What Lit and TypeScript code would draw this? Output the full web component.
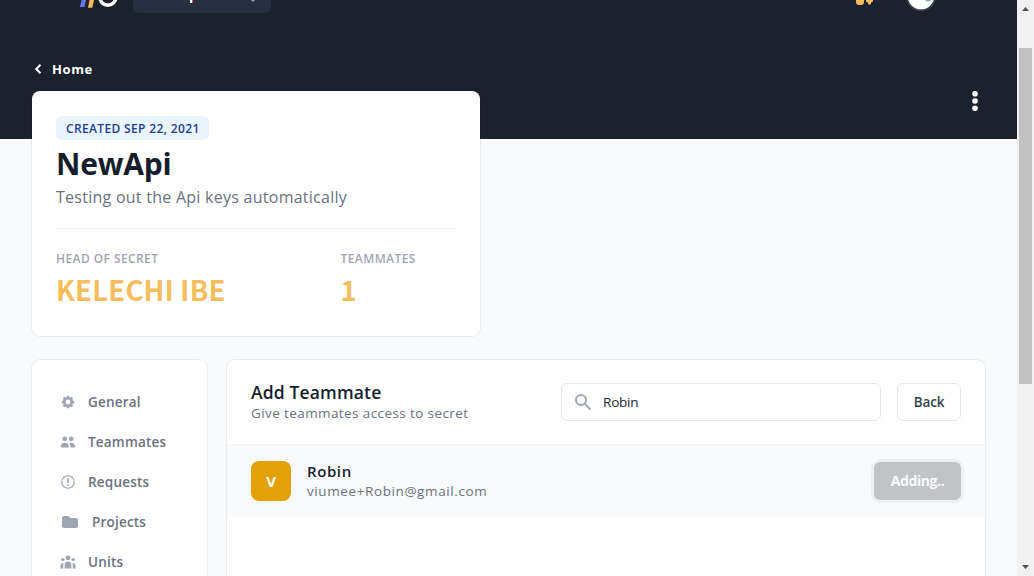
import { LitElement, html, css, svg } from "lit";
import { customElement } from "lit/decorators.js";

const icons = {
  gear: svg`<path fill-rule="evenodd" d="M11.49 3.17c-.38-1.56-2.6-1.56-2.98 0a1.532 1.532 0 01-2.286.948c-1.372-.836-2.942.734-2.106 2.106.54.886.061 2.042-.947 2.287-1.561.379-1.561 2.6 0 2.978a1.532 1.532 0 01.947 2.287c-.836 1.372.734 2.942 2.106 2.106a1.532 1.532 0 012.287.947c.379 1.561 2.6 1.561 2.978 0a1.533 1.533 0 012.287-.947c1.372.836 2.942-.734 2.106-2.106a1.533 1.533 0 01.947-2.287c1.561-.379 1.561-2.6 0-2.978a1.532 1.532 0 01-.947-2.287c.836-1.372-.734-2.942-2.106-2.106a1.532 1.532 0 01-2.287-.947zM10 13a3 3 0 100-6 3 3 0 000 6z"/>`,
  users: svg`<path d="M9 6a3 3 0 11-6 0 3 3 0 016 0zM17 6a3 3 0 11-6 0 3 3 0 016 0zM12.93 17c.046-.327.07-.66.07-1a6.97 6.97 0 00-1.5-4.33A5 5 0 0119 16v1h-6.07zM6 11a5 5 0 015 5v1H1v-1a5 5 0 015-5z"/>`,
  alert: svg`<circle cx="10" cy="10" r="7.800" fill="none" stroke="currentColor" stroke-width="1.500"/><path d="M9 5.500h2v5.600H9zM9 12.500h2v2H9z"/>`,
  folder: svg`<path d="M2 6a2 2 0 012-2h4.500l2 2H16a2 2 0 012 2V14a2 2 0 01-2 2H4a2 2 0 01-2-2z"/>`,
  group: svg`<circle cx="10" cy="4.800" r="3"/><circle cx="3.600" cy="7" r="2.100"/><circle cx="16.400" cy="7" r="2.100"/><path d="M5.800 18v-4.500a4.200 4.200 0 018.400 0V18zM.5 18v-3.500a3.300 3.300 0 014-3.200c-.4.900-.5 1.700-.5 2.700v4zM19.500 18v-3.500a3.300 3.300 0 00-4-3.200c.4.900.5 1.700.5 2.700v4z"/>`,
};

@customElement("app-root")
export class AppRoot extends LitElement {
  static styles = css`
    :host {
      display: flex;
      height: 576px;
      overflow: hidden;
      font-family: "Open Sans", "Noto Sans", sans-serif;
      color: #161e2e;
    }
    * { box-sizing: border-box; }
    svg { display: block; flex: none; }
    .page {
      width: 1017px;
      height: 576px;
      overflow: hidden;
      background: linear-gradient(#1b212d 139px, #f9fafc 139px);
    }
    .nav { display: flex; height: 13px; align-items: flex-end; padding-left: 78px; }
    .logo { width: 40px; height: 13px; }
    .select {
      margin-left: 15px;
      width: 138px;
      height: 13px;
      border-radius: 0 0 6px 6px;
      background: #252f3f;
    }
    .invite { margin-left: 583px; }
    .avatar { margin-left: 30px; }
    .back { display: flex; align-items: center; height: 24px; margin: 44px 0 10px 34px; color: #fff; }
    .back span { margin-left: 10px; font-size: 13px; line-height: 24px; font-weight: 700; letter-spacing: .6px; }
    .top { display: flex; justify-content: space-between; padding: 0 39px 0 32px; }
    .ring { background: #fff; box-shadow: 0 0 0 1px rgba(0, 0, 0, .055); border-radius: 8px; }
    .summary { width: 448px; height: 245px; padding: 25px 24px 0; }
    .badge {
      width: 153px;
      height: 24px;
      padding-left: 10px;
      border-radius: 6px;
      background: #ebf5ff;
      color: #233f95;
      font-size: 12px;
      line-height: 25px;
      font-weight: 600;
      letter-spacing: .35px;
      white-space: nowrap;
    }
    .title { font-size: 30px; line-height: 36px; margin-top: 6px; font-weight: 700; letter-spacing: -.2px; }
    .desc { font-size: 16px; line-height: 24px; margin-top: 3px; color: #6b7280; letter-spacing: .26px; white-space: nowrap; }
    .stats { display: flex; margin-top: 19px; border-top: 1px solid #f3f4f6; padding-top: 21px; }
    .stat { width: 284.500px; flex: none; }
    .stat.small { width: 100px; }
    .label { font-size: 12px; line-height: 18px; color: #9fa6b2; font-weight: 600; letter-spacing: .42px; }
    .value {
      font-family: "Noto Sans CJK JP", sans-serif;
      font-size: 27.500px;
      line-height: 36px;
      margin-top: 3px;
      color: #f6bd5c;
      font-weight: 700;
      letter-spacing: .2px;
    }
    .columns { display: flex; gap: 20px; padding: 24px 32px 0; }
    .side { width: 175px; height: 240px; padding-top: 22px; }
    .item { display: flex; align-items: center; height: 40px; padding-left: 28px; color: #9fa6b2; }
    .item span { margin-left: 12px; color: #6b7280; font-size: 13.500px; line-height: 20px; font-weight: 600; letter-spacing: .2px; }
    .panel { width: 758px; height: 240px; }
    .head { display: flex; align-items: center; height: 85px; padding: 0 24px; border-bottom: 1px solid #f3f4f6; }
    .heading { width: 310px; flex: none; padding-bottom: 1px; }
    .heading h2 { margin: 0; font-size: 17.500px; line-height: 24px; font-weight: 600; letter-spacing: .15px; }
    .heading p { margin: 0; font-size: 13.500px; line-height: 19px; color: #6b7280; letter-spacing: .4px; }
    .search, .btn { height: 38px; border: 1px solid #e5e7eb; border-radius: 6px; background: #fff; font-size: 13.500px; }
    .search { display: flex; align-items: center; width: 320px; padding-left: 11px; color: #9fa6b2; }
    .search span { margin-left: 10px; padding-bottom: 1px; color: #161e2e; letter-spacing: -.2px; }
    .btn { width: 64px; margin-left: 16px; text-align: center; line-height: 36px; font-weight: 600; color: #374151; letter-spacing: -.2px; }
    .person { display: flex; align-items: center; height: 72px; padding: 0 24px; background: #f9fafc; }
    .tile {
      width: 40px;
      height: 40px;
      border-radius: 8px;
      background: #e3a008;
      color: #fff;
      text-align: center;
      font-size: 15px;
      line-height: 41px;
      font-weight: 700;
    }
    .who { margin-left: 16px; flex: 1; }
    .name { font-size: 15px; line-height: 20px; font-weight: 600; letter-spacing: .6px; }
    .mail { font-size: 13.500px; line-height: 20px; color: #6b7280; letter-spacing: .6px; }
    .adding {
      width: 87px;
      height: 38px;
      border-radius: 6px;
      background: #c1c3c7;
      box-shadow: 0 0 0 3px #eff0f2;
      color: #f9fafc;
      text-align: center;
      font-size: 14px;
      line-height: 38px;
      font-weight: 700;
      letter-spacing: -.4px;
    }
    .scroll {
      display: flex;
      flex-direction: column;
      align-items: center;
      width: 17px;
      height: 576px;
      background: #f1f1f1;
      padding-top: 7px;
    }
    .thumb { width: 13px; height: 336px; margin: 37px 0 181px; background: #c1c1c1; }
  `;

  private item(icon: unknown, label: string, size = 16) {
    return html`<div class="item">
      <svg width=${size} height=${size} viewBox="0 0 20 20" fill="currentColor">${icon}</svg>
      <span>${label}</span>
    </div>`;
  }

  render() {
    return html`
      <div class="page">
        <div class="nav">
          <svg class="logo" viewBox="0 0 40 13">
            <path d="M3.500 0h4.500L6.500 7H2z" fill="#6875e5" /><path d="M11.500 0h4.500l-1.700 7.800h-4.300z" fill="#f6bd5c" />
            <circle cx="29.800" cy="-2.500" r="7.800" fill="none" stroke="#fff" stroke-width="3.600" />
          </svg>
          <div class="select">
            <svg width="138" height="13" viewBox="0 0 138 13">
              <path d="M57 0h2v3h-2z" fill="#fff" /><path d="M59 0h1v3h-1z" fill="#d34b50" />
              <path d="M118 0h4l-2 2z" fill="#9fa6b2" />
            </svg>
          </div>
          <svg class="invite" width="22" height="13" viewBox="0 0 22 13" fill="#f6bd5c">
            <path d="M2 0h8v2q0 3-3 3H5Q2 5 2 2z" /><path d="M12 0h7v1.500l-2 1.100V4q-1.500 1-3 0V2.600l-2-1.100z" />
          </svg>
          <svg class="avatar" width="32" height="13" viewBox="0 0 32 13">
            <circle cx="15" cy="-4" r="14.200" fill="#fff" stroke="#374151" stroke-width="1.800" />
            <path d="M19 0h6l-1.500 1.200h-3z" fill="#6ea2f2" />
          </svg>
        </div>
        <div class="back">
          <svg width="8" height="10" viewBox="0 0 8 10"><path d="M6.500 .7L2.200 5l4.300 4.300" fill="none" stroke="#fff" stroke-width="2" /></svg>
          <span>Home</span>
        </div>
        <div class="top">
          <div class="summary ring">
            <div class="badge">CREATED SEP 22, 2021</div>
            <div class="title">NewApi</div>
            <div class="desc">Testing out the Api keys automatically</div>
            <div class="stats">
              <div class="stat"><div class="label">HEAD OF SECRET</div><div class="value">KELECHI IBE</div></div>
              <div class="stat small"><div class="label">TEAMMATES</div><div class="value">1</div></div>
            </div>
          </div>
          <svg width="6" height="20" viewBox="0 0 6 20" fill="#fff">
            <circle cx="3" cy="2.700" r="2.800" /><circle cx="3" cy="10" r="2.800" /><circle cx="3" cy="17.300" r="2.800" />
          </svg>
        </div>
        <div class="columns">
          <div class="side ring">
            ${this.item(icons.gear, "General")} ${this.item(icons.users, "Teammates")}
            ${this.item(icons.alert, "Requests")} ${this.item(icons.folder, "Projects", 20)}
            ${this.item(icons.group, "Units")}
          </div>
          <div class="panel ring">
            <div class="head">
              <div class="heading"><h2>Add Teammate</h2><p>Give teammates access to secret</p></div>
              <div class="search">
                <svg width="20" height="20" viewBox="0 0 20 20" fill="none" stroke="currentColor" stroke-width="2">
                  <circle cx="8" cy="8" r="5" /><path d="M11.600 11.600L17.500 17.500" />
                </svg>
                <span>Robin</span>
              </div>
              <div class="btn">Back</div>
            </div>
            <div class="person">
              <div class="tile">V</div>
              <div class="who"><div class="name">Robin</div><div class="mail">viumee+Robin@gmail.com</div></div>
              <div class="adding">Adding..</div>
            </div>
          </div>
        </div>
      </div>
      <div class="scroll">
        <svg width="7" height="4" viewBox="0 0 7 4" fill="#505050"><path d="M3.500 0L7 4H0z" /></svg>
        <div class="thumb"></div>
        <svg width="7" height="4" viewBox="0 0 7 4" fill="#505050"><path d="M0 0h7L3.500 4z" /></svg>
      </div>
    `;
  }
}
